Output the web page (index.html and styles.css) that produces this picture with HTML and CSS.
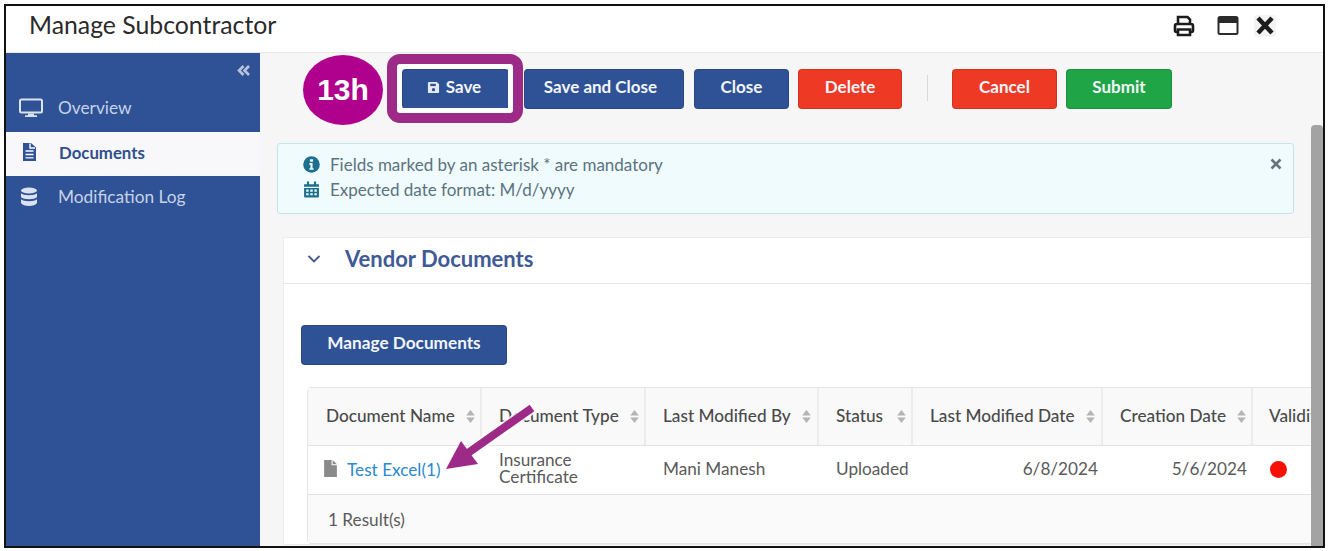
FILE: index.html
```html
<!DOCTYPE html>
<html lang="en">
<head>
<meta charset="utf-8">
<title>Manage Subcontractor</title>
<link rel="stylesheet" href="styles.css">
</head>
<body>
<div class="frame">
  <header class="titlebar">
    <h1 class="title">Manage Subcontractor</h1>
    <div class="window-tools">
      <svg class="tool" viewBox="0 0 22 22"><path d="M5 9V2h9.500L17 4.500V9M5 17H3.500A1.500 1.500 0 0 1 2 15.500V11a2 2 0 0 1 2-2h14a2 2 0 0 1 2 2v4.500a1.500 1.500 0 0 1-1.500 1.500H17M5 14.500h12V20H5z" fill="none" stroke="#1c1c1c" stroke-width="2.600"/></svg>
      <svg class="tool" viewBox="0 0 22 22"><rect x="1.500" y="2" width="19" height="17" rx="1.500" fill="none" stroke="#2b2b2b" stroke-width="2"/><rect x="1.500" y="2" width="19" height="6" fill="#2b2b2b"/></svg>
      <svg class="tool tool-close" viewBox="0 0 22 22"><path d="M4 3l14 15M18 3L4 18" fill="none" stroke="#1c1c1c" stroke-width="4.500"/></svg>
    </div>
  </header>
  <div class="body">
    <aside class="sidebar">
      <div class="collapse">
        <svg class="collapse-icon" viewBox="0 0 14 11"><path d="M6.500 1L2 5.500 6.500 10M12 1L7.500 5.500 12 10" fill="none" stroke="#b7c4dc" stroke-width="2.600"/></svg>
      </div>
      <nav class="nav">
        <a class="nav-item overview">
          <svg class="nav-icon" viewBox="0 0 24 20"><rect x="1" y="1.500" width="22" height="13" rx="1.500" fill="none" stroke="#dbe3f0" stroke-width="2"/><path d="M9 15.500h6v2H9zM6 17.300h12V19H6z" fill="#dbe3f0"/></svg>
          <span>Overview</span>
        </a>
        <a class="nav-item active">
          <svg class="nav-icon" viewBox="0 0 24 20"><path d="M4 1h8l5 4.500V19H4z" fill="#2f5296"/><path d="M11 1.500v4.500h5M6.500 9h8M6.500 12.500h8" fill="none" stroke="#fff" stroke-width="1.400"/><path d="M6.500 15.800h8" stroke="#fff" stroke-width="1.200"/></svg>
          <span>Documents</span>
        </a>
        <a class="nav-item">
          <svg class="nav-icon" viewBox="0 0 24 20"><ellipse cx="10" cy="3.500" rx="8" ry="3" fill="#dbe3f0"/><path d="M2 6.300c2 2.600 14 2.600 16 0V10c-2 3-14 3-16 0zM2 12.300c2 2.600 14 2.600 16 0V16c-2 4-14 4-16 0z" fill="#dbe3f0"/></svg>
          <span>Modification Log</span>
        </a>
      </nav>
    </aside>
    <main class="main">
      <div class="toolbar">
        <button class="btn btn-blue btn-save">
          <svg class="save-icon" viewBox="0 0 14 14"><path d="M1 2a1 1 0 0 1 1-1h8.500L13 3.500V12a1 1 0 0 1-1 1H2a1 1 0 0 1-1-1z" fill="#e4e9f3"/><path d="M3.500 3h6v2.500h-6z" fill="#2f5296"/><circle cx="7" cy="9.300" r="1.800" fill="#2f5296"/></svg>
          Save
        </button>
        <button class="btn btn-blue btn-saveclose">Save and Close</button>
        <button class="btn btn-blue btn-close">Close</button>
        <button class="btn btn-red btn-delete">Delete</button>
        <span class="divider"></span>
        <button class="btn btn-red btn-cancel">Cancel</button>
        <button class="btn btn-green btn-submit">Submit</button>
      </div>
      <div class="alert">
        <div class="alert-lines">
          <div class="alert-line">
            <svg class="alert-icon" viewBox="0 0 16 16"><circle cx="8" cy="8" r="7.800" fill="#1d6f8e"/><path d="M6.500 3h3v2.500h-3zM6 6.700h3v4.800h1V13H6v-1.500h1V8.200H6z" fill="#f0fbfd"/></svg>
            Fields marked by an asterisk * are mandatory
          </div>
          <div class="alert-line">
            <svg class="alert-icon" viewBox="0 0 16 16"><path d="M1 3h14v2.500H1zM3.700 .5h2v3h-2zM10.300 .5h2v3h-2z" fill="#1d6f8e"/><path d="M1 6.500h14V14.500a1 1 0 0 1-1 1H2a1 1 0 0 1-1-1z" fill="#1d6f8e"/><path d="M3 8h2.300v2H3zM6.850 8h2.300v2h-2.300zM10.700 8H13v2h-2.300zM3 11.500h2.300v2H3zM6.850 11.500h2.300v2h-2.300zM10.700 11.500H13v2h-2.300z" fill="#f0fbfd"/></svg>
            Expected date format: M/d/yyyy
          </div>
        </div>
        <svg class="alert-close" viewBox="0 0 12 12"><path d="M1.500 1.500l9 9M10.500 1.500l-9 9" fill="none" stroke="#66757c" stroke-width="2.600"/></svg>
      </div>
      <section class="card">
        <div class="card-head">
          <svg class="chevron" viewBox="0 0 14 10"><path d="M1.500 2L7 7.500 12.500 2" fill="none" stroke="#46598f" stroke-width="1.800"/></svg>
          <h2 class="card-title">Vendor Documents</h2>
        </div>
        <div class="card-body">
          <button class="btn btn-blue btn-manage">Manage Documents</button>
          <div class="grid">
            <div class="grid-row grid-head">
              <div class="th c1">Document Name <svg class="sort" viewBox="0 0 10 14"><path d="M5 1l4 5H1zM5 13L1 8h8z" fill="#b4b4b4"/></svg></div>
              <div class="th c2">Document Type <svg class="sort" viewBox="0 0 10 14"><path d="M5 1l4 5H1zM5 13L1 8h8z" fill="#b4b4b4"/></svg></div>
              <div class="th c3">Last Modified By <svg class="sort" viewBox="0 0 10 14"><path d="M5 1l4 5H1zM5 13L1 8h8z" fill="#b4b4b4"/></svg></div>
              <div class="th c4 spread">Status <svg class="sort" viewBox="0 0 10 14"><path d="M5 1l4 5H1zM5 13L1 8h8z" fill="#b4b4b4"/></svg></div>
              <div class="th c5">Last Modified Date <svg class="sort" viewBox="0 0 10 14"><path d="M5 1l4 5H1zM5 13L1 8h8z" fill="#b4b4b4"/></svg></div>
              <div class="th c6">Creation Date <svg class="sort" viewBox="0 0 10 14"><path d="M5 1l4 5H1zM5 13L1 8h8z" fill="#b4b4b4"/></svg></div>
              <div class="th c7">Validity</div>
            </div>
            <div class="grid-row grid-data">
              <div class="td c1">
                <svg class="file-icon" viewBox="0 0 12 16"><path d="M0 0h7v5h5v11H0zM8 0l4 4H8z" fill="#8a8a8a"/></svg>
                <a class="doc-link">Test Excel(1)</a>
              </div>
              <div class="td c2 tight">Insurance<br>Certificate</div>
              <div class="td c3">Mani Manesh</div>
              <div class="td c4">Uploaded</div>
              <div class="td c5 right">6/8/2024</div>
              <div class="td c6 right">5/6/2024</div>
              <div class="td c7"><span class="dot"></span></div>
            </div>
            <div class="grid-foot">1 Result(s)</div>
          </div>
        </div>
      </section>
    </main>
    <div class="thumb"></div>
  </div>
  <div class="step-badge">13h</div>
  <div class="highlight"></div>
  <svg class="arrow" viewBox="0 0 100 70">
    <path d="M88 2L26 46" stroke="#fff" stroke-width="12" opacity="0.800"/>
    <path d="M88 2L24 47" stroke="#9c2a86" stroke-width="8"/>
    <path d="M2 63L17 35 34 58z" fill="#9c2a86"/>
  </svg>
</div>
</body>
</html>
```
FILE: styles.css
```css
* { box-sizing: border-box; }
html, body { margin: 0; padding: 0; background: #fff; }
body {
  width: 1328px;
  height: 551px;
  padding: 4px 3px 3px 4px;
  font-family: Lato, "Liberation Sans", sans-serif;
  overflow: hidden;
}
.frame {
  position: relative;
  width: 1321px;
  height: 544px;
  border: 2px solid #111;
  display: flex;
  flex-direction: column;
  overflow: hidden;
  background: #fff;
}
.titlebar {
  height: 47px;
  flex: none;
  display: flex;
  align-items: center;
  justify-content: space-between;
  padding: 0 47px 10px 23px;
  background: #fff;
  border-bottom: 1px solid #e8e8e8;
}
.title { margin: 0; font-size: 24.800px; font-weight: 400; color: #2a2a2a; }
.window-tools { display: flex; align-items: center; margin-top: 4px; }
.tool { width: 22px; height: 22px; margin-left: 22px; }
.tool-close { margin-left: 15px; background: #f3f3f3; border-radius: 3px; }
.body { flex: 1; display: flex; min-height: 0; background: #f6f6f7; position: relative; }
.sidebar { width: 254px; flex: none; background: #2f5296; }
.collapse { height: 32px; display: flex; justify-content: flex-end; padding: 12px 9px 0 0; }
.collapse-icon { width: 14px; height: 11px; }
.nav { display: flex; flex-direction: column; }
.nav-item {
  display: flex;
  align-items: center;
  gap: 15px;
  padding-left: 13px;
  font-size: 17.300px;
  color: #c6d3e8;
}
.nav-item.overview { height: 47px; padding-bottom: 2px; }
.nav-item.active { height: 44px; background: #f8f8fa; color: #2f4f8f; font-weight: 700; padding-bottom: 4px; }
.nav-item:last-child { height: 41px; }
.nav-item.active span { font-size: 16.800px; margin-left: 1px; }
.nav-icon { width: 24px; height: 20px; flex: none; }
.main { flex: 1; min-width: 0; overflow: hidden; padding: 16px 0 0 17px; }
.toolbar { display: flex; align-items: stretch; height: 41px; padding-left: 125px; }
.btn {
  height: 40px;
  border-radius: 4px;
  border: 1px solid rgba(0, 0, 0, 0.12);
  color: #f2f5fa;
  font-family: inherit;
  font-size: 17px;
  font-weight: 700;
  padding: 0 0 5px;
  display: inline-flex;
  align-items: center;
  justify-content: center;
  gap: 6px;
}
.btn-blue { background: #2f5296; }
.btn-red { background: #ee3a24; }
.btn-green { background: #1fa546; }
.btn-save { width: 107px; margin-right: 15px; padding-right: 3px; }
.save-icon { width: 13px; height: 13px; margin-top: 1px; }
.btn-saveclose { width: 160px; margin-right: 10px; padding-right: 7px; }
.btn-close { width: 95px; margin-right: 9px; }
.btn-delete { width: 104px; margin-right: 25px; }
.divider { width: 1px; height: 26px; background: #d8d8d8; margin: 6px 24px 0 0; }
.btn-cancel { width: 105px; margin-right: 9px; }
.btn-submit { width: 106px; }
.alert {
  margin-top: 33px;
  width: 1017px;
  height: 71px;
  display: flex;
  justify-content: space-between;
  background: #f0fbfd;
  border: 1px solid #c4e3ea;
  border-radius: 3px;
  padding: 8px 11px 0 25px;
  color: #5b7380;
  font-size: 17px;
}
.alert-lines { display: flex; flex-direction: column; }
.alert-line { display: flex; align-items: center; gap: 10px; height: 25px; }
.alert-icon { width: 17px; height: 17px; flex: none; }
.alert-close { width: 12px; height: 12px; margin-top: 6px; }
.card {
  margin: 23px 0 0 6px;
  width: 1040px;
  background: #fff;
  border: 1px solid #ececec;
  border-right: 0;
}
.card-head {
  height: 46px;
  display: flex;
  align-items: center;
  gap: 24px;
  padding: 0 0 4px 23px;
  border-bottom: 1px solid #e6e6e6;
}
.chevron { width: 14px; height: 10px; }
.card-title { margin: 0; font-size: 22px; font-weight: 700; color: #3f5a96; }
.card-body { padding: 41px 0 0 17px; }
.btn-manage { width: 206px; display: flex; font-size: 17.200px; }
.grid {
  margin: 22px 0 0 6px;
  width: 1040px;
  border: 1px solid #e4e4e4;
  border-radius: 4px;
  font-size: 17.200px;
  color: #5a5a5a;
}
.grid-row { display: grid; grid-template-columns: 174px 164px 173px 94px 190px 150px 95px; }
.grid-head { height: 58px; background: #f9f9f9; border-bottom: 1px solid #e2e2e2; }
.th {
  display: flex;
  align-items: center;
  gap: 10px;
  padding: 0 0 2px 17px;
  color: #4a4a4a;
  font-weight: 500;
  white-space: nowrap;
  border-right: 2px solid #ececec;
}
.th.c1 { padding-left: 18px; }
.th.c7 { border-right: 0; padding-left: 16px; }
.th.spread { gap: 13px; }
.sort { width: 11px; height: 15px; flex: none; margin-top: 2px; }
.grid-data { height: 49px; border-bottom: 1px solid #e2e2e2; background: #fff; }
.td { display: flex; align-items: center; padding: 0 0 4px 17px; }
.td.c1 { gap: 10px; padding: 0 0 1px 16px; }
.td.tight { line-height: 17px; }
.td.right { justify-content: flex-end; padding: 0 6px 4px 0; }
.td.c5.right { padding-right: 5px; }
.td.c7 { padding: 0 0 2px 17px; }
.file-icon { width: 13px; height: 17px; flex: none; margin-bottom: 2px; }
.doc-link { color: #2a8ad0; }
.dot { width: 17px; height: 17px; border-radius: 50%; background: #f71004; }
.grid-foot { height: 48px; display: flex; align-items: center; padding-left: 20px; background: #fafafa; }
.thumb { position: absolute; top: 72px; bottom: 0; right: 0; width: 12px; background: #a3a3a3; border-radius: 4px 4px 0 0; }
.step-badge {
  position: absolute;
  left: 297px;
  top: 49px;
  width: 80px;
  height: 70px;
  border-radius: 50%;
  background: #b0008e;
  color: #fff;
  font-family: "Liberation Sans", Arial, sans-serif;
  font-weight: 700;
  font-size: 30px;
  display: flex;
  align-items: center;
  justify-content: center;
}
.highlight {
  position: absolute;
  left: 381px;
  top: 48px;
  width: 136px;
  height: 69px;
  border: 10px solid #9c2a86;
  border-radius: 13px;
  box-shadow: inset 0 0 0 5px #fff;
}
.arrow { position: absolute; left: 438px; top: 400px; width: 100px; height: 70px; overflow: visible; }
```
